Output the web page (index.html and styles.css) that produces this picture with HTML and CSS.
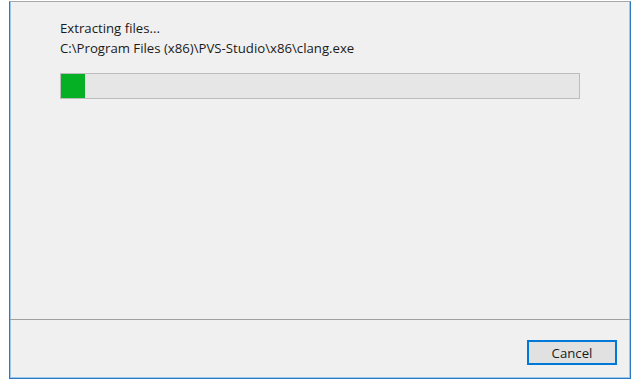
FILE: index.html
```html
<!DOCTYPE html>
<html lang="en">
<head>
    <meta charset="UTF-8">
    <title>Extracting files</title>
    <link rel="stylesheet" href="styles.css">
</head>
<body>
    <div class="window">
        <div class="content">
            <div class="status">Extracting files...</div>
            <div class="path">C:\Program Files (x86)\PVS-Studio\x86\clang.exe</div>
            <div class="progress">
                <div class="progress-fill" style="width: 24px;"></div>
            </div>
        </div>
        <div class="footer">
            <button class="cancel">Cancel</button>
        </div>
    </div>
</body>
</html>
```

FILE: styles.css
```css
body {
    margin: 0;
    padding: 0;
    background-color: #ffffff;
    font-family: 'Open Sans', 'Noto Sans', 'Liberation Sans', sans-serif;
    font-size: 13.2px;
    color: #1a1a1a;
}
.window {
    margin: 1px 4px 0 9px;
    width: 620px;
    height: 376px;
    background-color: #f0f0f0;
    border-top: 1px solid #a8a8a8;
    border-left: 1px solid #2b79c2;
    border-right: 1px solid #2b79c2;
    border-bottom: 1px solid #2b79c2;
    box-shadow: inset 1px 0 0 #9cc8ee, inset -1px 0 0 #9cc8ee, inset 0 -1px 0 #9cc8ee;
    display: flex;
    flex-direction: column;
}
.content {
    height: 318px;
    padding: 16px 0 0 50px;
    box-sizing: border-box;
    border-bottom: 1px solid #a0a0a0;
}
.status,
.path {
    line-height: 20px;
    height: 20px;
}
.progress {
    margin-top: 15px;
    width: 518px;
    height: 24px;
    background-color: #e6e6e6;
    border: 1px solid #bcbcbc;
}
.progress-fill {
    height: 24px;
    background-color: #06b025;
}
.footer {
    flex: 1;
    display: flex;
    justify-content: flex-end;
    align-items: flex-start;
    padding: 20px 13px 0 0;
}
.cancel {
    width: 90px;
    height: 25px;
    font-family: inherit;
    font-size: 13.2px;
    color: #1a1a1a;
    background-color: #e1e1e1;
    border: 2px solid #0078d7;
    padding: 0;
}
```
